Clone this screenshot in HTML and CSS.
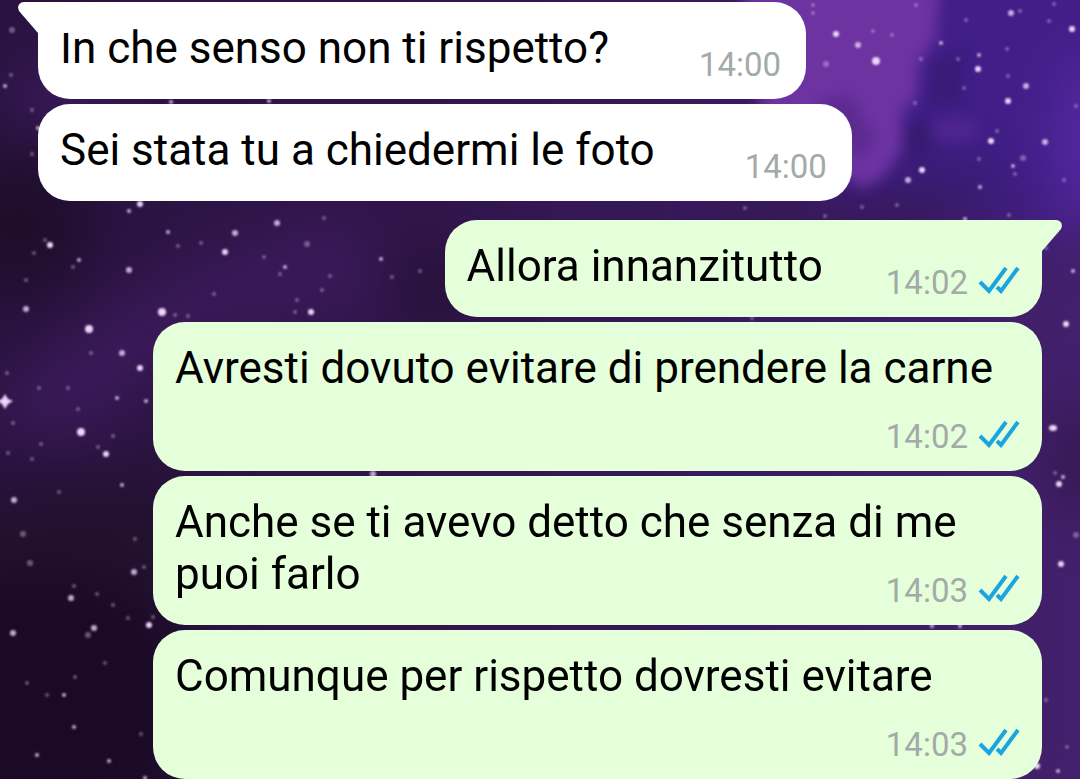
FILE: index.html
```
<!DOCTYPE html>
<html lang="it">
<head>
<meta charset="utf-8">
<meta name="viewport" content="width=device-width, initial-scale=1">
<title>Chat</title>
<link rel="stylesheet" href="styles.css">
</head>
<body>
<svg class="sky" viewBox="0 0 1080 779" preserveAspectRatio="xMidYMid slice" aria-hidden="true">
  <defs>
    <linearGradient id="base" x1="0" y1="0" x2="1" y2="0">
      <stop offset="0" stop-color="#2a1340"/>
      <stop offset=".4" stop-color="#31154b"/>
      <stop offset=".7" stop-color="#381a60"/>
      <stop offset="1" stop-color="#43206b"/>
    </linearGradient>
    <filter id="haze" x="-50%" y="-50%" width="200%" height="200%" color-interpolation-filters="sRGB"><feGaussianBlur stdDeviation="28"/></filter>
    <filter id="mist" x="-50%" y="-50%" width="200%" height="200%" color-interpolation-filters="sRGB"><feGaussianBlur stdDeviation="7"/></filter>
    <filter id="glow" x="-10%" y="-10%" width="120%" height="120%" color-interpolation-filters="sRGB"><feGaussianBlur stdDeviation=".8"/></filter>
  </defs>
  <rect width="1080" height="779" fill="url(#base)"/>
  <g filter="url(#haze)">
    <path d="M-90 500L190 470V860H-90z" fill="#23112f"/>
    <ellipse cx="50" cy="700" rx="150" ry="130" fill="#1a0a26"/>
    <ellipse cx="20" cy="225" rx="70" ry="70" fill="#1e0e2b"/>
    <path d="M-30 420L90 320 200 260 340 210 400 300 200 340 80 440z" fill="#3a1959"/>
    <ellipse cx="70" cy="95" rx="60" ry="35" fill="#3a1a5b"/>
    <ellipse cx="430" cy="290" rx="40" ry="40" fill="#261237"/>
    <path d="M780-80H1160V230H820z" fill="#411e88"/>
    <ellipse cx="950" cy="190" rx="70" ry="30" fill="#381b70"/>
    <ellipse cx="830" cy="220" rx="130" ry="24" fill="#34184f"/>
    <ellipse cx="1086" cy="140" rx="24" ry="90" fill="#5c2aa6"/>
    <ellipse cx="1082" cy="460" rx="20" ry="55" fill="#2b1340"/>
  </g>
  <g filter="url(#mist)">
    <path d="M740-30H942L936 38 920 62 916 98 902 112 902 150 882 178 862 188 835 170 760 110z" fill="#6c33a1"/>
    <path d="M815 102L850 95 876 140 858 162z" fill="#5c2a90"/>
    <ellipse cx="955" cy="130" rx="24" ry="12" fill="#50258f"/>
    <path d="M908 124L926 116 932 150 900 164z" fill="#371a70"/>
    <path d="M930 62L965 50 962 104 928 108z" fill="#3a1b78"/>
  </g>
  <g fill="#efd5fa" filter="url(#glow)">
    <g>
      <circle cx="162" cy="312" r="4"/><circle cx="89" cy="329" r="4"/><path d="M5 394l3 5 5 2-5 3-3 5-3-5-5-3 5-2z"/>
      <circle cx="81" cy="432" r="4"/><circle cx="106" cy="454" r="3"/><circle cx="140" cy="204" r="3"/><circle cx="876" cy="61" r="4"/>
      <circle cx="978" cy="69" r="3"/><circle cx="1072" cy="29" r="3"/><circle cx="1008" cy="101" r="3"/><circle cx="149" cy="625" r="3"/>
      <circle cx="1059" cy="484" r="3"/><circle cx="1061" cy="564" r="3"/><ellipse cx="1053" cy="428" rx="4" ry="3"/><circle cx="1037" cy="766" r="3"/>
      <circle cx="991" cy="141" r="3"/><circle cx="922" cy="170" r="3"/><circle cx="311" cy="312" r="3"/><circle cx="225" cy="252" r="3"/>
      <circle cx="140" cy="368" r="3"/><circle cx="1066" cy="324" r="3"/><circle cx="836" cy="34" r="3"/><circle cx="50" cy="245" r="3"/>
    </g>
    <g opacity=".8">
      <circle cx="129" cy="211" r="2"/><circle cx="235" cy="233" r="3"/><circle cx="277" cy="223" r="3"/><circle cx="129" cy="270" r="3"/>
      <circle cx="26" cy="309" r="3"/><circle cx="79" cy="260" r="2"/><circle cx="285" cy="267" r="2"/><circle cx="381" cy="259" r="2"/>
      <circle cx="122" cy="353" r="3"/><circle cx="146" cy="401" r="2"/><circle cx="117" cy="398" r="2"/><circle cx="14" cy="500" r="3"/>
      <circle cx="122" cy="485" r="2"/><circle cx="13" cy="633" r="3"/><circle cx="94" cy="628" r="3"/><circle cx="71" cy="598" r="3"/>
      <circle cx="134" cy="572" r="3"/><circle cx="74" cy="727" r="2"/><circle cx="37" cy="755" r="2"/><circle cx="109" cy="761" r="2"/>
      <circle cx="858" cy="45" r="3"/><circle cx="1011" cy="13" r="3"/><circle cx="1026" cy="86" r="3"/><circle cx="979" cy="55" r="2"/>
      <circle cx="941" cy="43" r="2"/><circle cx="1045" cy="142" r="3"/><circle cx="1013" cy="166" r="2"/><circle cx="908" cy="180" r="3"/>
      <circle cx="980" cy="187" r="2"/><circle cx="1058" cy="771" r="2"/><circle cx="1073" cy="271" r="2"/>
      <circle cx="373" cy="474" r="3"/><circle cx="269" cy="101" r="2"/><circle cx="171" cy="102" r="2"/><circle cx="145" cy="778" r="2"/>
      <circle cx="5" cy="86" r="2"/><circle cx="965" cy="219" r="2"/><circle cx="932" cy="626" r="2"/><circle cx="960" cy="626" r="2"/>
      <circle cx="168" cy="232" r="2"/><circle cx="1063" cy="477" r="2"/><circle cx="64" cy="695" r="2"/><circle cx="38" cy="128" r="2"/>
    </g>
    <g opacity=".38">
      <circle cx="12" cy="30" r="3"/><circle cx="11" cy="75" r="2"/><circle cx="32" cy="110" r="2"/><circle cx="32" cy="154" r="2"/>
      <circle cx="45" cy="240" r="2"/><circle cx="34" cy="253" r="2"/><circle cx="73" cy="267" r="2"/><circle cx="26" cy="280" r="2"/>
      <circle cx="178" cy="246" r="2"/><circle cx="201" cy="243" r="2"/><circle cx="264" cy="257" r="2"/><circle cx="280" cy="274" r="2"/>
      <circle cx="307" cy="244" r="3"/><circle cx="324" cy="218" r="2"/><circle cx="330" cy="276" r="2"/><circle cx="322" cy="290" r="2"/>
      <circle cx="297" cy="300" r="2"/><circle cx="295" cy="312" r="2"/><circle cx="392" cy="277" r="2"/><circle cx="420" cy="271" r="2"/>
      <circle cx="214" cy="294" r="2"/><circle cx="175" cy="315" r="2"/><circle cx="188" cy="316" r="2"/><circle cx="91" cy="353" r="2"/>
      <circle cx="7" cy="373" r="2"/><circle cx="39" cy="388" r="2"/><circle cx="68" cy="388" r="2"/><circle cx="78" cy="409" r="2"/>
      <circle cx="13" cy="423" r="2"/><circle cx="8" cy="453" r="2"/><circle cx="41" cy="444" r="2"/><circle cx="113" cy="436" r="2"/>
      <circle cx="98" cy="447" r="2"/><circle cx="32" cy="459" r="2"/><circle cx="59" cy="492" r="2"/><circle cx="23" cy="534" r="3"/>
      <circle cx="30" cy="563" r="3"/><circle cx="135" cy="539" r="2"/><circle cx="144" cy="567" r="2"/><circle cx="74" cy="586" r="2"/>
      <circle cx="97" cy="594" r="2"/><circle cx="113" cy="605" r="2"/><circle cx="88" cy="635" r="3"/><circle cx="153" cy="617" r="2"/>
      <circle cx="128" cy="618" r="2"/><circle cx="105" cy="663" r="2"/><circle cx="75" cy="677" r="2"/><circle cx="47" cy="695" r="2"/>
      <circle cx="27" cy="683" r="2"/><circle cx="141" cy="734" r="2"/><circle cx="813" cy="5" r="2"/><circle cx="813" cy="13" r="2"/>
      <circle cx="826" cy="64" r="3"/><circle cx="873" cy="31" r="2"/><circle cx="892" cy="35" r="2"/><circle cx="916" cy="5" r="2"/>
      <circle cx="966" cy="20" r="2"/><circle cx="1020" cy="11" r="2"/><circle cx="1049" cy="21" r="2"/><circle cx="1054" cy="4" r="2"/>
      <circle cx="1007" cy="49" r="2"/><circle cx="958" cy="59" r="2"/><circle cx="921" cy="59" r="2"/><circle cx="1008" cy="76" r="2"/>
      <circle cx="964" cy="88" r="2"/><circle cx="915" cy="103" r="2"/><circle cx="1076" cy="106" r="2"/><circle cx="997" cy="131" r="2"/>
      <circle cx="1023" cy="158" r="3"/><circle cx="979" cy="159" r="2"/><circle cx="1015" cy="174" r="2"/><circle cx="897" cy="205" r="2"/>
      <circle cx="862" cy="207" r="2"/><circle cx="825" cy="216" r="2"/><circle cx="1009" cy="215" r="2"/><circle cx="1046" cy="248" r="2"/>
      <circle cx="1055" cy="473" r="2"/><circle cx="1076" cy="535" r="3"/><circle cx="1067" cy="747" r="2"/><circle cx="1046" cy="700" r="2"/>
      <circle cx="1064" cy="180" r="2"/><circle cx="745" cy="208" r="2"/><circle cx="752" cy="318" r="2"/>
    </g>
  </g>
</svg>
<svg class="symbols" aria-hidden="true">
  <symbol id="read" viewBox="0 0 42 28">
    <path d="M2 16L11 25 28 2M19 21L23 25 40 2" fill="none" stroke="#1aa5e0" stroke-width="4"/>
  </symbol>
</svg>
<main class="chat">
  <section class="group incoming">
    <p class="bubble first"><svg class="tail" viewBox="0 0 60 31" aria-hidden="true"><path d="M60 0H6Q-2 1 1 9L20 31H60z"/></svg>In che senso non ti rispetto?<span class="meta"><time>14:00</time></span></p>
    <p class="bubble">Sei stata tu a chiedermi le foto<span class="meta"><time>14:00</time></span></p>
  </section>
  <section class="group outgoing">
    <p class="bubble first"><svg class="tail" viewBox="0 0 60 31" aria-hidden="true"><path d="M0 0H54Q62 1 59 9L40 31H0z"/></svg>Allora innanzitutto<span class="meta"><time>14:02</time><svg class="ticks" role="img" aria-label="Letto"><use href="#read"/></svg></span></p>
    <p class="bubble">Avresti dovuto evitare di prendere la carne<span class="meta"><time>14:02</time><svg class="ticks" role="img" aria-label="Letto"><use href="#read"/></svg></span></p>
    <p class="bubble">Anche se ti avevo detto che senza di me puoi farlo<span class="meta"><time>14:03</time><svg class="ticks" role="img" aria-label="Letto"><use href="#read"/></svg></span></p>
    <p class="bubble">Comunque per rispetto dovresti evitare<span class="meta"><time>14:03</time><svg class="ticks" role="img" aria-label="Letto"><use href="#read"/></svg></span></p>
  </section>
</main>
</body>
</html>
```
FILE: styles.css
```
* {
  box-sizing: border-box;
}

html {
  background: #27123d;
}

body {
  margin: 0;
  overflow: hidden;
  font-family: Roboto, "Liberation Sans", sans-serif;
  color: #000;
}

.sky {
  position: fixed;
  inset: 0;
  z-index: -1;
  width: 100%;
  height: 100%;
}

.symbols {
  position: absolute;
  width: 0;
  height: 0;
}

.chat {
  display: flex;
  flex-direction: column;
  gap: 19px;
  padding: 2px 38px 0;
}

.group {
  display: flex;
  flex-direction: column;
  gap: 5px;
}

.incoming {
  --bubble: #fff;
  align-items: flex-start;
}

.outgoing {
  --bubble: #e5ffdb;
  align-items: flex-end;
}

.bubble {
  position: relative;
  display: flow-root;
  max-width: calc(100% - 115px);
  margin: 0;
  padding: 20px 22px 0;
  border-radius: 32px;
  background: var(--bubble);
  font-size: 44px;
  line-height: 52px;
}

.incoming .first {
  border-top-left-radius: 0;
}

.outgoing .first {
  border-top-right-radius: 0;
}

.tail {
  position: absolute;
  top: 0;
  width: 60px;
  height: 31px;
  fill: var(--bubble);
}

.incoming .tail {
  left: -20px;
}

.outgoing .tail {
  right: -20px;
}

.meta {
  float: right;
  display: flex;
  align-items: center;
  gap: 10px;
  height: 77px;
  margin-left: 63px;
  padding-top: 8px;
  color: #a3aaa8;
  font-size: 33px;
  line-height: 40px;
}

.incoming .meta {
  margin-left: 90px;
  padding-right: 3px;
}

.ticks {
  width: 42px;
  height: 28px;
  margin-bottom: 6px;
}
```
